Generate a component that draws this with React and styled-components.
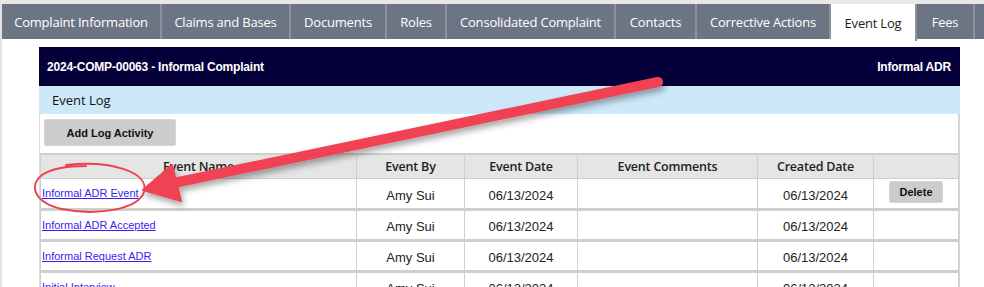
import React from 'react'
import styled, {createGlobalStyle, css} from 'styled-components'

const GlobalStyle = createGlobalStyle`
body{
  margin:0;
  background:#fff;
  font-family:'Liberation Sans',Arial,sans-serif;
}
`
const Page = styled.div`
position:relative;
width:984px;
height:287px;
overflow:hidden;
box-sizing:border-box;
border-top:4px solid #e8e8e8;
border-left:2px solid #e2e2e2;
`
const TabBar = styled.div`
display:flex;
height:35px;
background:#6d7584;
`
const Tab = styled.div`
flex:none;
display:flex;
align-items:center;
justify-content:center;
box-sizing:border-box;
height:100%;
border-right:2px solid #8c929c;
color:#fff;
font-family:'Open Sans','Noto Sans',sans-serif;
font-size:13px;
letter-spacing:-0.2px;
${p => p.active && css`
  background:#fff;
  color:#1e1e1e;
  height:37px;
`}
`
const Panel = styled.div`
margin:8px 0 0 37px;
width:921px;
`
const Header = styled.div`
display:flex;
align-items:center;
justify-content:space-between;
height:39px;
padding:0 9px 0 8px;
background:#05003a;
color:#fff;
font-weight:bold;
font-size:12px;
letter-spacing:-0.2px;
`
const SubHeader = styled.div`
display:flex;
align-items:center;
height:28px;
padding-left:13px;
background:#cce8f9;
color:#111;
font-family:'Open Sans','Noto Sans',sans-serif;
font-size:13px;
`
const Body = styled.div`
border-left:1px solid #ddd;
border-right:2px solid #d6d6d6;
padding:5px 0 0 0;
`
const GrayButton = styled.button`
display:block;
border:1px solid #d6d6d6;
border-radius:2px;
background:#cccccc;
color:#111;
font-family:'Liberation Sans',Arial,sans-serif;
font-weight:bold;
font-size:11px;
cursor:pointer;
${p => p.small ? css`
  width:54px;
  height:22px;
  margin:0 auto;
` : css`
  width:132px;
  height:27px;
  margin-left:4px;
`}
`
const Table = styled.table`
margin-top:7px;
width:918px;
border-collapse:collapse;
table-layout:fixed;
`
const Th = styled.th`
height:23px;
padding:0;
background:#e5e5e5;
border:1px solid #cfcfcf;
border-top:2px solid #cfcfcf;
color:#222;
font-family:'Open Sans','Noto Sans',sans-serif;
font-weight:600;
font-size:12.5px;
letter-spacing:-0.2px;
`
const Td = styled.td`
box-sizing:border-box;
height:31px;
padding:3px 0 0 0;
border-left:1px solid #cfcfcf;
border-right:1px solid #cfcfcf;
border-bottom:3px solid #cfcfcf;
color:#222;
font-size:13px;
text-align:center;
vertical-align:middle;
${p => p.$align === 'link' && css`
  text-align:left;
  vertical-align:top;
  padding:6px 0 0 1px;
`}
${p => p.$align === 'top' && css`
  vertical-align:top;
  padding-top:2px;
`}
`
const Link = styled.a`
color:#3a1ef0;
font-size:11px;
text-decoration:underline;
`
const Overlay = styled.svg`
position:absolute;
left:-2px;
top:-4px;
pointer-events:none;
`

const tabs = [
  {label:'Complaint Information', w:160},
  {label:'Claims and Bases', w:129},
  {label:'Documents', w:96},
  {label:'Roles', w:60},
  {label:'Consolidated Complaint', w:169},
  {label:'Contacts', w:81},
  {label:'Corrective Actions', w:134},
  {label:'Event Log', w:86, active:true},
  {label:'Fees', w:58},
  {label:'', w:20},
]

const cols = [316, 108, 113, 180, 116, 85]
const heads = ['Event Name', 'Event By', 'Event Date', 'Event Comments', 'Created Date', '']

const events = [
  {name:'Informal ADR Event', canDelete:true},
  {name:'Informal ADR Accepted'},
  {name:'Informal Request ADR'},
  {name:'Initial Interview'},
]

const Annotation = () => (
  <Overlay width="984" height="287" viewBox="0 0 984 287">
    <defs>
      <filter id="sh" x="-10%" y="-10%" width="120%" height="140%">
        <feDropShadow dx="2" dy="4" stdDeviation="3" floodColor="#000" floodOpacity="0.35"/>
      </filter>
    </defs>
    <g filter="url(#sh)" fill="#f04352" stroke="#f04352">
      <line x1="658" y1="82" x2="174" y2="183" strokeWidth="10" strokeLinecap="round"/>
      <polygon points="143,190 172,165 181,201" strokeWidth="2" strokeLinejoin="round"/>
    </g>
    <path d="M66 165 C 110 160, 150 172, 144 192 C 138 210, 95 216, 62 209 C 35 203, 28 186, 42 175 C 52 168, 70 166, 86 166"
      fill="none" stroke="#ef4050" strokeWidth="2" strokeLinecap="round"/>
  </Overlay>
)

export default function App() {
  return (
    <>
      <GlobalStyle/>
      <Page>
        <TabBar>
          {tabs.map((t, i) => (
            <Tab key={i} active={t.active} style={{width:t.w}}>{t.label}</Tab>
          ))}
        </TabBar>
        <Panel>
          <Header>
            <span>2024-COMP-00063 - Informal Complaint</span>
            <span>Informal ADR</span>
          </Header>
          <SubHeader>Event Log</SubHeader>
          <Body>
            <GrayButton>Add Log Activity</GrayButton>
            <Table>
              <colgroup>
                {cols.map((w, i) => <col key={i} style={{width:w}}/>)}
              </colgroup>
              <thead>
                <tr>{heads.map((h, i) => <Th key={i}>{h}</Th>)}</tr>
              </thead>
              <tbody>
                {events.map((e, i) => (
                  <tr key={i}>
                    <Td $align="link"><Link href="#">{e.name}</Link></Td>
                    <Td>Amy Sui</Td>
                    <Td>06/13/2024</Td>
                    <Td></Td>
                    <Td>06/13/2024</Td>
                    <Td $align="top">{e.canDelete && <GrayButton small>Delete</GrayButton>}</Td>
                  </tr>
                ))}
              </tbody>
            </Table>
          </Body>
        </Panel>
        <Annotation/>
      </Page>
    </>
  )
}
